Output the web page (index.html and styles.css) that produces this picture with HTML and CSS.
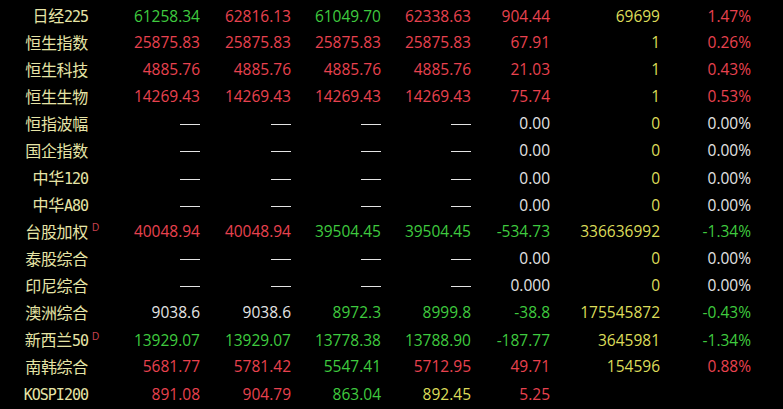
FILE: index.html
```html
<!DOCTYPE html>
<html lang="zh-CN">
<head>
<meta charset="utf-8">
<title>全球指数</title>
<link rel="stylesheet" href="styles.css">
</head>
<body>
<div class="board">
  <div class="row"><div class="name">日经<span class="lat">225</span></div><div class="mk"></div><div class="g">61258.34</div><div class="r">62816.13</div><div class="g">61049.70</div><div class="r">62338.63</div><div class="r">904.44</div><div class="y">69699</div><div class="r">1.47%</div></div>
  <div class="row"><div class="name">恒生指数</div><div class="mk"></div><div class="r">25875.83</div><div class="r">25875.83</div><div class="r">25875.83</div><div class="r">25875.83</div><div class="r">67.91</div><div class="y">1</div><div class="r">0.26%</div></div>
  <div class="row"><div class="name">恒生科技</div><div class="mk"></div><div class="r">4885.76</div><div class="r">4885.76</div><div class="r">4885.76</div><div class="r">4885.76</div><div class="r">21.03</div><div class="y">1</div><div class="r">0.43%</div></div>
  <div class="row"><div class="name">恒生生物</div><div class="mk"></div><div class="r">14269.43</div><div class="r">14269.43</div><div class="r">14269.43</div><div class="r">14269.43</div><div class="r">75.74</div><div class="y">1</div><div class="r">0.53%</div></div>
  <div class="row"><div class="name">恒指波幅</div><div class="mk"></div><div class="w"><span class="dash"></span></div><div class="w"><span class="dash"></span></div><div class="w"><span class="dash"></span></div><div class="w"><span class="dash"></span></div><div class="w">0.00</div><div class="y">0</div><div class="w">0.00%</div></div>
  <div class="row"><div class="name">国企指数</div><div class="mk"></div><div class="w"><span class="dash"></span></div><div class="w"><span class="dash"></span></div><div class="w"><span class="dash"></span></div><div class="w"><span class="dash"></span></div><div class="w">0.00</div><div class="y">0</div><div class="w">0.00%</div></div>
  <div class="row"><div class="name">中华<span class="lat">120</span></div><div class="mk"></div><div class="w"><span class="dash"></span></div><div class="w"><span class="dash"></span></div><div class="w"><span class="dash"></span></div><div class="w"><span class="dash"></span></div><div class="w">0.00</div><div class="y">0</div><div class="w">0.00%</div></div>
  <div class="row"><div class="name">中华<span class="lat">A80</span></div><div class="mk"></div><div class="w"><span class="dash"></span></div><div class="w"><span class="dash"></span></div><div class="w"><span class="dash"></span></div><div class="w"><span class="dash"></span></div><div class="w">0.00</div><div class="y">0</div><div class="w">0.00%</div></div>
  <div class="row"><div class="name">台股加权</div><div class="mk"><sup class="d">D</sup></div><div class="r">40048.94</div><div class="r">40048.94</div><div class="g">39504.45</div><div class="g">39504.45</div><div class="g">-534.73</div><div class="y">336636992</div><div class="g">-1.34%</div></div>
  <div class="row"><div class="name">泰股综合</div><div class="mk"></div><div class="w"><span class="dash"></span></div><div class="w"><span class="dash"></span></div><div class="w"><span class="dash"></span></div><div class="w"><span class="dash"></span></div><div class="w">0.00</div><div class="y">0</div><div class="w">0.00%</div></div>
  <div class="row"><div class="name">印尼综合</div><div class="mk"></div><div class="w"><span class="dash"></span></div><div class="w"><span class="dash"></span></div><div class="w"><span class="dash"></span></div><div class="w"><span class="dash"></span></div><div class="w">0.000</div><div class="y">0</div><div class="w">0.00%</div></div>
  <div class="row"><div class="name">澳洲综合</div><div class="mk"></div><div class="w">9038.6</div><div class="w">9038.6</div><div class="g">8972.3</div><div class="g">8999.8</div><div class="g">-38.8</div><div class="y">175545872</div><div class="g">-0.43%</div></div>
  <div class="row"><div class="name">新西兰<span class="lat">50</span></div><div class="mk"><sup class="d">D</sup></div><div class="g">13929.07</div><div class="g">13929.07</div><div class="g">13778.38</div><div class="g">13788.90</div><div class="g">-187.77</div><div class="y">3645981</div><div class="g">-1.34%</div></div>
  <div class="row"><div class="name">南韩综合</div><div class="mk"></div><div class="r">5681.77</div><div class="r">5781.42</div><div class="g">5547.41</div><div class="r">5712.95</div><div class="r">49.71</div><div class="y">154596</div><div class="r">0.88%</div></div>
  <div class="row"><div class="name"><span class="lat">KOSPI200</span></div><div class="mk"></div><div class="r">891.08</div><div class="r">904.79</div><div class="g">863.04</div><div class="y">892.45</div><div class="r">5.25</div><div class="y"></div><div class="r"></div></div>
</div>
</body>
</html>
```
FILE: styles.css
```css
html, body {
  margin: 0;
  padding: 0;
  background: #000;
}
body {
  width: 783px;
  height: 409px;
  overflow: hidden;
  font-family: "Open Sans", "Noto Sans CJK SC", sans-serif;
  font-size: 15.5px;
}
.board {
  padding-top: 2px;
}
.row {
  display: grid;
  grid-template-columns: 88px 24px 88px 91px 90px 90px 79px 110px 91px;
  height: 27px;
  align-items: center;
  line-height: 27px;
}
.row > div {
  text-align: right;
  white-space: nowrap;
}
.row > .name {
  font-family: "Noto Sans CJK SC", sans-serif;
  font-size: 16px;
  color: #e6e4a6;
  letter-spacing: -0.3px;
}
.lat {
  font-family: "DejaVu Sans Mono", monospace;
  font-size: 15px;
  letter-spacing: -1px;
}
.row > .mk {
  text-align: left;
  padding-left: 4px;
}
.d {
  font-family: "Liberation Sans", sans-serif;
  font-size: 10px;
  color: #c8404e;
  vertical-align: 6px;
  line-height: 0;
}
.r { color: #e8424f; }
.g { color: #3fca3f; }
.w { color: #e4e4e4; }
.y { color: #dcdc5a; }
.dash {
  display: inline-block;
  width: 20px;
  height: 1px;
  background: #e4e4e4;
  vertical-align: middle;
}
```
